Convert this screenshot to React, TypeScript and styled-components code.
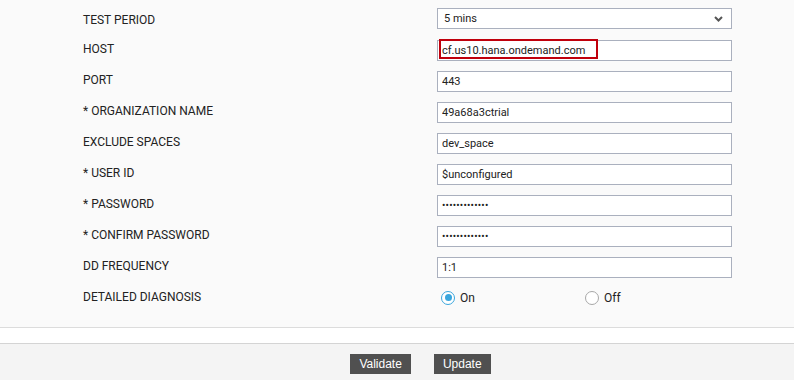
import { Fragment } from 'react';
import styled, { createGlobalStyle } from 'styled-components';

const GlobalStyle = createGlobalStyle`
  html, body {
    margin: 0;
    padding: 0;
    background: #f4f4f4;
  }
  body {
    font-family: Roboto, "Liberation Sans", Arial, sans-serif;
  }
`;

const Page = styled.div`
  width: 794px;
  height: 380px;
  overflow: hidden;
  display: flex;
  flex-direction: column;
`;

const FormPanel = styled.div`
  background: #fafafa;
  border-bottom: 1px solid #dcdcdc;
  padding: 8px 0 19px 83px;
  display: grid;
  grid-template-columns: 354px 295px;
  grid-auto-rows: 21px;
  row-gap: 10px;
  align-items: center;
`;

const Label = styled.label<{ offset?: number }>`
  font-size: 12px;
  color: #222;
  line-height: 21px;
  position: relative;
  top: ${({ offset }) => offset ?? 0}px;
`;

const Field = styled.div`
  position: relative;
  height: 21px;
`;

const TextInput = styled.input`
  box-sizing: border-box;
  width: 100%;
  height: 21px;
  margin: 0;
  padding: 0 4px;
  border: 1px solid #aab0be;
  background: #fff;
  font-family: Roboto, "Liberation Sans", Arial, sans-serif;
  font-size: 11px;
  color: #222;
  outline: none;
`;

const PasswordInput = styled(TextInput)`
  font-size: 10px;
  letter-spacing: 0.2px;
`;

const SelectBox = styled.div`
  box-sizing: border-box;
  height: 21px;
  border: 1px solid #aab0be;
  background: #fff;
  display: flex;
  align-items: center;
  justify-content: space-between;
  padding: 0 8px 0 6px;
  font-size: 11px;
  color: #222;
`;

const Highlight = styled.div`
  position: absolute;
  left: 2px;
  top: 0;
  width: 159px;
  height: 20px;
  box-sizing: border-box;
  border: 2px solid #c0000c;
  pointer-events: none;
`;

const RadioGroup = styled.div`
  display: grid;
  grid-template-columns: 144px 144px;
  padding-left: 4px;
  align-items: center;
`;

const RadioOption = styled.span`
  display: flex;
  align-items: center;
  gap: 5px;
  font-size: 12px;
  color: #222;
`;

const RadioCircle = styled.span<{ checked?: boolean }>`
  box-sizing: border-box;
  width: 14px;
  height: 14px;
  border-radius: 50%;
  border: ${({ checked }) => (checked ? '1.5px solid #3aa6dd' : '1px solid #a8a8a8')};
  background: #fff;
  display: flex;
  align-items: center;
  justify-content: center;

  &::after {
    content: '';
    width: 7px;
    height: 7px;
    border-radius: 50%;
    background: ${({ checked }) => (checked ? '#3aa6dd' : 'transparent')};
  }
`;

const Spacer = styled.div`
  height: 15px;
  background: #fff;
  border-bottom: 1px solid #d4d4d4;
`;

const Footer = styled.div`
  flex: 1;
  background: #f4f4f4;
  display: flex;
  justify-content: center;
  align-items: flex-start;
  gap: 23px;
  padding: 10px 0 0 47px;
`;

const ActionButton = styled.button`
  height: 20px;
  padding: 0 9px;
  border: none;
  border-radius: 0;
  background: #505050;
  color: #fff;
  font-family: "Liberation Sans", Arial, sans-serif;
  font-size: 12px;
  line-height: 20px;
`;

const Chevron = () => (
  <svg width="9" height="6" viewBox="0 0 9 6">
    <path d="M1 1 L4.5 4.5 L8 1" fill="none" stroke="#555" strokeWidth="2" />
  </svg>
);

const rows: { label: string; value: string; password?: boolean }[] = [
  { label: 'PORT', value: '443' },
  { label: '* ORGANIZATION NAME', value: '49a68a3ctrial' },
  { label: 'EXCLUDE SPACES', value: 'dev_space' },
  { label: '* USER ID', value: '$unconfigured' },
  { label: '* PASSWORD', value: 'aaaaaaaaaaaaa', password: true },
  { label: '* CONFIRM PASSWORD', value: 'aaaaaaaaaaaaa', password: true },
  { label: 'DD FREQUENCY', value: '1:1' },
];

export default function App() {
  return (
    <Page>
      <GlobalStyle />
      <FormPanel>
        <Label offset={2}>TEST PERIOD</Label>
        <SelectBox>
          <span>5 mins</span>
          <Chevron />
        </SelectBox>

        <Label>HOST</Label>
        <Field>
          <TextInput defaultValue="cf.us10.hana.ondemand.com" />
          <Highlight />
        </Field>

        {rows.map((row) => (
          <Fragment key={row.label}>
            <Label>{row.label}</Label>
            <Field>
              {row.password ? (
                <PasswordInput type="password" defaultValue={row.value} />
              ) : (
                <TextInput defaultValue={row.value} />
              )}
            </Field>
          </Fragment>
        ))}

        <Label>DETAILED DIAGNOSIS</Label>
        <RadioGroup>
          <RadioOption>
            <RadioCircle checked />
            On
          </RadioOption>
          <RadioOption>
            <RadioCircle />
            Off
          </RadioOption>
        </RadioGroup>
      </FormPanel>
      <Spacer />
      <Footer>
        <ActionButton>Validate</ActionButton>
        <ActionButton>Update</ActionButton>
      </Footer>
    </Page>
  );
}
